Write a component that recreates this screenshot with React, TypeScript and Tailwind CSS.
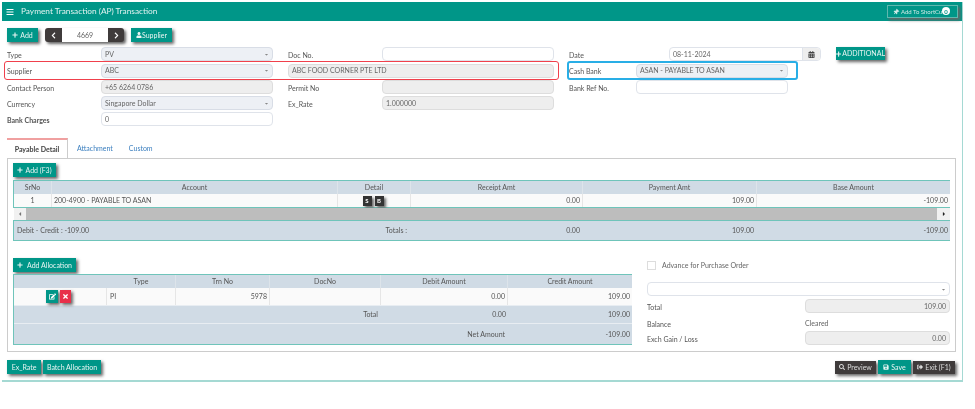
import { ReactNode } from "react";
import {
  FaBars,
  FaCalendarAlt,
  FaCaretDown,
  FaCaretLeft,
  FaCaretRight,
  FaChevronLeft,
  FaChevronRight,
  FaEdit,
  FaPlus,
  FaSave,
  FaSearch,
  FaSignOutAlt,
  FaThumbtack,
  FaTimes,
  FaUser,
} from "react-icons/fa";

const shadow = "shadow-[2px_2px_3px_#666]";

function TealButton({ className = "", children }: { className?: string; children: ReactNode }) {
  return (
    <button className={`flex items-center justify-center gap-[2px] bg-[#009688] text-[7px] text-[#e8f5f3] ${shadow} ${className}`}>
      {children}
    </button>
  );
}

function Label({ className = "", children }: { className?: string; children: ReactNode }) {
  return <div className={`pt-[1px] text-[7px] leading-[14px] text-[#555] ${className}`}>{children}</div>;
}

function Field({ value = "", width, tone = "white", caret = false, right = false }: {
  value?: string;
  width: string;
  tone?: "white" | "select" | "gray";
  caret?: boolean;
  right?: boolean;
}) {
  const tones = {
    white: "bg-white border-[#dfe3ea]",
    select: "bg-[#edf0f5] border-[#d8dde6]",
    gray: "bg-[#eeeeee] border-[#dddddd]",
  };
  return (
    <div className={`flex h-[14px] items-center rounded-[4px] border px-[3px] text-[7px] text-[#666] ${tones[tone]} ${width} ${right ? "justify-end" : "justify-between"}`}>
      <span>{value}</span>
      {caret && <FaCaretDown className="text-[5px] text-[#888]" />}
    </div>
  );
}

function HeadCell({ children }: { children?: ReactNode }) {
  return <div className="border-r border-[#dde4ea] text-center last:border-r-0">{children}</div>;
}

function Cell({ children, align = "right" }: { children?: ReactNode; align?: "left" | "right" | "center" }) {
  const aligns = { left: "text-left", right: "text-right", center: "text-center" };
  return <div className={`border-r border-[#e6e6e6] px-[2px] last:border-r-0 ${aligns[align]}`}>{children}</div>;
}

export default function App() {
  const detailCols = "grid-cols-[38px_286px_73px_172px_174px_193px]";
  const allocCols = "grid-cols-[93px_69px_94px_111px_127px_124px]";

  return (
    <div className="h-[409px] w-[975px] overflow-hidden bg-white pl-[2px] pt-[2px] font-['Lato',sans-serif] blur-[0.3px]">
      <div className="h-[380px] w-[961px] border-b-2 border-r border-[#a5d9d3]">
        {/* Header */}
        <div className="flex h-[19px] items-center justify-between bg-[#009688] pl-[4px] pr-[4px] text-white">
          <div className="flex items-center gap-[7px]">
            <FaBars className="text-[8px]" />
            <span className="text-[8.3px] text-[#e0f2f0]">Payment Transaction (AP) Transaction</span>
          </div>
          <div className={`relative flex h-[13px] w-[71px] items-center gap-[2px] overflow-hidden border border-[#5fb8af] pl-[5px] text-[6px] text-[#cfe9e6] ${shadow}`}>
            <FaThumbtack className="shrink-0 rotate-45 text-[6px]" />
            <span className="whitespace-nowrap">Add To ShortCut</span>
            <span className="absolute right-[7px] top-[1px] flex h-[8px] w-[8px] items-center justify-center rounded-full bg-white text-[6px] font-bold text-[#009688]">0</span>
          </div>
        </div>

        <div className="pl-[5px]">
          {/* Toolbar */}
          <div className="mt-[7px] flex h-[14px] items-center">
            <TealButton className="h-[14px] w-[31px]"><FaPlus className="text-[6px]" />Add</TealButton>
            <div className={`ml-[7px] flex h-[14px] w-[79px] items-center rounded-[3px] bg-[#3f3b3b] ${shadow}`}>
              <div className="flex w-[17px] justify-center text-white"><FaChevronLeft className="text-[7px]" /></div>
              <div className="flex h-full w-[46px] items-center justify-center bg-white text-[7px] text-[#666]">4669</div>
              <div className="flex w-[16px] justify-center text-white"><FaChevronRight className="text-[7px]" /></div>
            </div>
            <TealButton className="ml-[7px] h-[14px] w-[41px] !gap-0"><FaUser className="text-[6px]" />Supplier</TealButton>
          </div>

          {/* Form */}
          <div className="mt-[5px] flex h-[14px] items-center">
            <Label className="w-[94px]">Type</Label>
            <Field value="PV" width="w-[172px]" tone="select" caret />
            <Label className="ml-[15px] w-[94px]">Doc No.</Label>
            <Field width="w-[172px]" />
            <Label className="ml-[15px] w-[100px]">Date</Label>
            <div className="flex h-[14px] w-[152px] items-center rounded-[4px] border border-[#dfe3ea] text-[7px] text-[#666]">
              <span className="flex-1 px-[3px]">08-11-2024</span>
              <div className="flex h-full w-[18px] items-center justify-center rounded-r-[4px] border-l border-[#dfe3ea] bg-[#eeeeee] text-[#444]">
                <FaCalendarAlt className="text-[7px]" />
              </div>
            </div>
            <TealButton className="ml-[15px] h-[13px] w-[49px] !gap-[1px] self-start text-[6.5px]"><FaPlus className="text-[6px]" />ADDITIONAL</TealButton>
          </div>

          <div className="relative mt-[2px] flex h-[15px] items-center">
            <Label className="w-[94px]">Supplier</Label>
            <Field value="ABC" width="w-[172px]" tone="select" caret />
            <div className="ml-[15px]"><Field value="ABC FOOD CORNER PTE LTD" width="w-[266px]" tone="gray" /></div>
            <Label className="ml-[15px] w-[67px]">Cash Bank</Label>
            <Field value="ASAN - PAYABLE TO ASAN" width="w-[152px]" tone="select" caret />
            <div className="absolute left-[-3px] top-[-2px] h-[19px] w-[555px] rounded-[3px] border-[1.5px] border-[#f0404c]" />
            <div className="absolute left-[560px] top-[-2px] h-[19px] w-[231px] rounded-[3px] border-2 border-[#29aee6]" />
          </div>

          <div className="mt-[2px] flex h-[14px] items-center">
            <Label className="w-[94px]">Contact Person</Label>
            <Field value="+65 6264 0786" width="w-[172px]" tone="gray" />
            <Label className="ml-[15px] w-[94px]">Permit No</Label>
            <Field width="w-[172px]" tone="gray" />
            <Label className="ml-[15px] w-[67px]">Bank Ref No.</Label>
            <Field width="w-[152px]" />
          </div>

          <div className="mt-[2px] flex h-[14px] items-center">
            <Label className="w-[94px]">Currency</Label>
            <Field value="Singapore Dollar" width="w-[172px]" tone="select" caret />
            <Label className="ml-[15px] w-[94px]">Ex_Rate</Label>
            <Field value="1.000000" width="w-[172px]" tone="gray" />
          </div>

          <div className="mt-[2px] flex h-[14px] items-center">
            <Label className="w-[94px] font-bold">Bank Charges</Label>
            <Field value="0" width="w-[172px]" />
          </div>

          {/* Tabs */}
          <div className="mt-[12px] flex h-[20px] items-end text-[7px]">
            <div className="flex h-[20px] w-[61px] items-center justify-center border-r border-t-2 border-[#cccccc] border-t-[#f0a0a0] font-bold text-[#444]">Payable Detail</div>
            <div className="ml-[9px] flex h-[20px] items-center text-[#3b7fbf]">Attachment</div>
            <div className="ml-[16px] flex h-[20px] items-center text-[#3b7fbf]">Custom</div>
          </div>

          <div className="mt-0 h-[194px] w-[949px] border border-[#cccccc] pl-[5px] pt-[4px]">
            <TealButton className="h-[14px] w-[43px]"><FaPlus className="text-[6px]" />Add (F3)</TealButton>

            {/* Payable detail table */}
            <div className="mt-[3px] w-[937px] text-[7px] text-[#555]">
              <div className="border-y border-l border-[#6fc4ba]">
                <div className={`grid h-[13px] items-center bg-[#d0dbe5] leading-[13px] ${detailCols}`}>
                  <HeadCell>SrNo</HeadCell>
                  <HeadCell>Account</HeadCell>
                  <HeadCell>Detail</HeadCell>
                  <HeadCell>Receipt Amt</HeadCell>
                  <HeadCell>Payment Amt</HeadCell>
                  <HeadCell>Base Amount</HeadCell>
                </div>
                <div className={`grid h-[13px] bg-[#fafafa] leading-[13px] ${detailCols}`}>
                  <Cell align="center">1</Cell>
                  <Cell align="left">200-4900 - PAYABLE TO ASAN</Cell>
                  <Cell align="center">
                    <div className="flex h-full items-center justify-center gap-[3px] pr-[2px]">
                      <span className={`flex h-[10px] w-[9px] items-center justify-center bg-[#333] text-[6px] font-bold text-white ${shadow}`}>S</span>
                      <span className={`flex h-[10px] w-[9px] items-center justify-center bg-[#333] text-[6px] font-bold text-white ${shadow}`}>B</span>
                    </div>
                  </Cell>
                  <Cell>0.00</Cell>
                  <Cell>109.00</Cell>
                  <Cell>-109.00</Cell>
                </div>
              </div>

              <div className="flex h-[12px] items-center pl-[1px]">
                <div className="flex h-full w-[12px] items-center justify-center bg-[#f1f1f1] text-[#777]"><FaCaretLeft className="text-[6px]" /></div>
                <div className="h-full flex-1 bg-[#bdbdbd]" />
                <div className="flex h-full w-[13px] items-center justify-center bg-[#f1f1f1] text-[#222]"><FaCaretRight className="text-[6px]" /></div>
              </div>

              <div className={`grid h-[21px] items-center border-y border-l border-[#6fc4ba] bg-[#d0dbe5] ${detailCols}`}>
                <div className="col-span-3 flex justify-between pl-[3px] pr-[4px]">
                  <span>Debit - Credit : -109.00</span>
                  <span>Totals :</span>
                </div>
                <div className="pr-[3px] text-right">0.00</div>
                <div className="pr-[3px] text-right">109.00</div>
                <div className="pr-[2px] text-right">-109.00</div>
              </div>
            </div>

            <div className="mt-[17px] flex w-[937px] justify-between">
              {/* Allocation table */}
              <div className="w-[619px]">
                <TealButton className="h-[14px] w-[63px] !gap-[4px]"><FaPlus className="text-[6px]" />Add Allocation</TealButton>
                <div className="mt-[2px] border-y border-l border-[#6fc4ba] text-[7px] text-[#555]">
                  <div className={`grid h-[13px] items-center bg-[#d0dbe5] leading-[13px] ${allocCols}`}>
                    <HeadCell />
                    <HeadCell>Type</HeadCell>
                    <HeadCell>Trn No</HeadCell>
                    <HeadCell>DocNo</HeadCell>
                    <HeadCell>Debit Amount</HeadCell>
                    <HeadCell>Credit Amount</HeadCell>
                  </div>
                  <div className={`grid h-[17px] bg-[#fafafa] leading-[17px] ${allocCols}`}>
                    <Cell align="center">
                      <div className="flex h-full items-center justify-center gap-[2px] pr-[3px]">
                        <span className={`flex h-[13px] w-[12px] items-center justify-center bg-[#009688] text-white ${shadow}`}><FaEdit className="text-[7px]" /></span>
                        <span className={`flex h-[13px] w-[11px] items-center justify-center bg-[#e8304a] text-white ${shadow}`}><FaTimes className="text-[7px]" /></span>
                      </div>
                    </Cell>
                    <Cell align="left"><span className="pl-[1px]">PI</span></Cell>
                    <Cell>5978</Cell>
                    <Cell />
                    <Cell>0.00</Cell>
                    <Cell>109.00</Cell>
                  </div>
                  <div className={`grid h-[18px] items-center border-t border-[#e8edf2] bg-[#d0dbe5] ${allocCols}`}>
                    <div className="col-span-4 pr-[3px] text-right">Total</div>
                    <div className="pr-[2px] text-right">0.00</div>
                    <div className="pr-[2px] text-right">109.00</div>
                  </div>
                  <div className={`grid h-[21px] items-center border-t border-[#e8edf2] bg-[#d0dbe5] ${allocCols}`}>
                    <div className="col-span-5 pr-[3px] text-right">Net Amount</div>
                    <div className="pr-[2px] text-right">-109.00</div>
                  </div>
                </div>
              </div>

              {/* Allocation summary */}
              <div className="w-[303px] pt-[3px] text-[7px] text-[#666]">
                <div className="flex h-[9px] items-center gap-[6px]">
                  <span className="h-[9px] w-[9px] border border-[#dddddd]" />
                  Advance for Purchase Order
                </div>
                <div className="mt-[12px]"><Field width="w-[303px]" caret /></div>
                <div className="mt-[3px] flex h-[14px] items-center justify-between">
                  <Label>Total</Label>
                  <Field value="109.00" width="w-[145px]" tone="gray" right />
                </div>
                <div className="mt-[3px] flex h-[14px] items-center">
                  <Label className="w-[158px]">Balance</Label>
                  <span>Cleared</span>
                </div>
                <div className="mt-[1px] flex h-[14px] items-center justify-between">
                  <Label>Exch Gain / Loss</Label>
                  <Field value="0.00" width="w-[145px]" tone="gray" right />
                </div>
              </div>
            </div>
          </div>

          {/* Footer buttons */}
          <div className="mt-[8px] flex h-[14px] w-[948px] items-center">
            <TealButton className="h-[14px] w-[34px]">Ex_Rate</TealButton>
            <TealButton className="ml-[2px] h-[14px] w-[58px]">Batch Allocation</TealButton>
            <button className={`ml-auto flex h-[13px] w-[41px] items-center justify-center gap-[2px] bg-[#3f3b3b] text-[7px] text-[#ddd] ${shadow}`}>
              <FaSearch className="text-[6px]" />Preview
            </button>
            <TealButton className="ml-[2px] h-[14px] w-[33px]"><FaSave className="text-[6px]" />Save</TealButton>
            <button className={`ml-[2px] flex h-[13px] w-[42px] items-center justify-center gap-[2px] bg-[#3f3b3b] text-[7px] text-[#ddd] ${shadow}`}>
              <FaSignOutAlt className="text-[6px]" />Exit (F1)
            </button>
          </div>
        </div>
      </div>
    </div>
  );
}
